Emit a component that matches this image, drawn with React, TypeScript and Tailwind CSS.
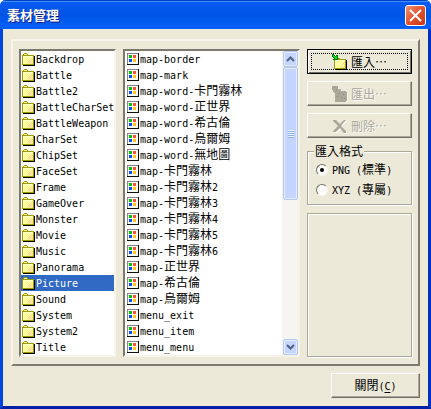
import { ReactNode, useState } from 'react'
import clsx from 'clsx'

const FOLDERS = [
  'Backdrop', 'Battle', 'Battle2', 'BattleCharSet', 'BattleWeapon', 'CharSet', 'ChipSet',
  'FaceSet', 'Frame', 'GameOver', 'Monster', 'Movie', 'Music', 'Panorama', 'Picture',
  'Sound', 'System', 'System2', 'Title',
]

const FILES = [
  'map-border', 'map-mark', 'map-word-卡門霧林', 'map-word-正世界', 'map-word-希古倫',
  'map-word-烏爾姆', 'map-word-無地圖', 'map-卡門霧林', 'map-卡門霧林2', 'map-卡門霧林3',
  'map-卡門霧林4', 'map-卡門霧林5', 'map-卡門霧林6', 'map-正世界', 'map-希古倫',
  'map-烏爾姆', 'menu_exit', 'menu_item', 'menu_menu',
]

const FORMATS = [
  { value: 'png', label: 'PNG (標準)' },
  { value: 'xyz', label: 'XYZ (專屬)' },
]

// Latin cells are half the width of a CJK cell: 10px mono next to 12px CJK
function Mixed({ text }: { text: string }) {
  const runs = text.match(/[\x20-\x7e]+|[^\x20-\x7e]+/g) ?? []
  return (
    <span className="whitespace-pre">
      {runs.map((run, i) => (
        <span
          key={i}
          className={
            /^[\x20-\x7e]/.test(run)
              ? "font-['DejaVu_Sans_Mono',monospace] text-[10px]"
              : "font-['Noto_Sans_CJK_TC',sans-serif] text-[12px]"
          }
        >
          {run}
        </span>
      ))}
    </span>
  )
}

function FolderIcon() {
  return (
    <svg width="13" height="13" viewBox="0 0 13 13" shapeRendering="crispEdges" aria-hidden="true">
      <path d="M2 0h3v1h1v1h6v10H0V2h1V1h1z" fill="#9c9c00" />
      <path d="M12 3h1v10H1v-1h11z" fill="#000" />
      <path d="M2 1h3v1H2zM1 3h10v8H1z" fill="#ffff9c" />
      <path d="M1 3h10v1H2v7H1z" fill="#ffffd8" />
      <path d="M9 5h1v1H9zM7 7h1v1H7zM9 7h1v1H9zM10 6h1v1h-1zM8 6h1v1H8zM5 9h1v1H5zM7 9h1v1H7zM9 9h1v1H9zM6 8h1v1H6zM8 8h1v1H8zM10 8h1v1h-1zM6 10h1v1H6zM8 10h1v1H8zM10 10h1v1h-1z" fill="#ffce9c" />
    </svg>
  )
}

function ImageIcon() {
  return (
    <svg width="12" height="12" viewBox="0 0 12 12" shapeRendering="crispEdges" aria-hidden="true">
      <path d="M0 0h12v12H0z" fill="#101010" />
      <path d="M0 0h11v11H0z" fill="#848484" />
      <path d="M1 1h10v10H1z" fill="#fff" />
      <path d="M2 2h3v3H2z" fill="#00c800" />
      <path d="M6 2h3v3H6z" fill="#ff5030" />
      <path d="M2 6h3v3H2z" fill="#0050ff" />
      <path d="M6 6h3v3H6z" fill="#ffc800" />
    </svg>
  )
}

function ImportIcon() {
  return (
    <svg width="16" height="16" viewBox="0 0 16 16" shapeRendering="crispEdges" aria-hidden="true">
      <path d="M2 4h6v1h6v10H2z" fill="#9c9c00" />
      <path d="M14 6h1v10H3v-1h11z" fill="#000" />
      <path d="M3 6h10v8H3z" fill="#ffff9c" />
      <path d="M3 6h10v1H4v7H3z" fill="#ffffd8" />
      <path d="M12 8h1v1h-1zM10 10h1v1h-1zM12 10h1v1h-1zM11 9h1v1h-1zM8 12h1v1H8zM10 12h1v1h-1zM12 12h1v1h-1zM9 13h1v1H9zM11 13h1v1h-1z" fill="#ffce9c" />
      <path d="M0 0h2v1h1v1h1V1h2v5H1V5h1V4H1V3H0z" fill="#007800" />
      <path d="M1 1h1v1h1v1h1V2h1v3H3V4H2V3H1z" fill="#00e020" />
    </svg>
  )
}

function ExportIcon() {
  const shape = 'M0 0h6v3h3v2h5v1h1v9h-1v1H3v-9H2V6H1V4H0z'
  return (
    <svg width="16" height="16" viewBox="0 0 16 16" shapeRendering="crispEdges" aria-hidden="true">
      <path d={shape} fill="#fff" transform="translate(1 1)" />
      <path d={shape} fill="#aca899" />
      <path d="M2 1h1v1H2zM4 3h1v1H4zM7 7h1v1H7zM11 8h1v1h-1zM5 10h1v1H5zM9 11h1v1H9zM12 12h1v1h-1z" fill="#8f8c7c" />
    </svg>
  )
}

function DeleteIcon() {
  const cross = 'M1 2h3l4 4 4-4h2L9 8l5 5v2h-2L8 10l-4 4H1v-1l5-5-5-5z'
  return (
    <svg width="16" height="16" viewBox="0 0 16 16" aria-hidden="true">
      <path d={cross} fill="#fff" transform="translate(1 1)" />
      <path d={cross} fill="#aca899" />
    </svg>
  )
}

type ListProps = {
  label: string
  items: string[]
  icon: ReactNode
  selected: string | null
  onSelect: (item: string) => void
}

function ItemList({ label, items, icon, selected, onSelect }: ListProps) {
  return (
    <ul aria-label={label} className="min-w-0 flex-1 overflow-hidden bg-white">
      {items.map((item) => (
        <li key={item}>
          <button
            type="button"
            onClick={() => onSelect(item)}
            className={clsx(
              'flex h-4 w-full items-center text-left leading-4',
              selected === item ? 'bg-[#316ac5] text-white' : 'text-black'
            )}
          >
            <span className="flex w-[15px] shrink-0 justify-center">{icon}</span>
            <Mixed text={item} />
          </button>
        </li>
      ))}
    </ul>
  )
}

function ScrollArrow({ label, path }: { label: string; path: string }) {
  return (
    <button
      type="button"
      aria-label={label}
      className="flex h-4 w-full items-center justify-center rounded-xs border border-[#b4c8f6] bg-[#c6d5fd] shadow-[inset_0_0_0_1px_#e4ecff]"
    >
      <svg width="9" height="6" viewBox="0 0 9 6" aria-hidden="true">
        <path d={path} fill="none" stroke="#4d6185" strokeWidth="2" />
      </svg>
    </button>
  )
}

function ScrollBar() {
  return (
    <div className="flex w-4 shrink-0 flex-col bg-[#f6f5f1] pl-px">
      <ScrollArrow label="Scroll up" path="M1 5l3.5-3.5L8 5" />
      <div className="flex-1">
        <div className="flex h-[133px] flex-col items-center justify-center gap-px rounded-xs border border-[#b4c8f6] bg-[#c6d5fd] shadow-[inset_0_0_0_1px_#e4ecff]">
          {[0, 1, 2, 3].map((n) => (
            <span key={n} className="h-px w-1.5 bg-[#eef4fe] shadow-[0_1px_0_#8cb0f8]" />
          ))}
        </div>
      </div>
      <ScrollArrow label="Scroll down" path="M1 1l3.5 3.5L8 1" />
    </div>
  )
}

const RAISED = 'border border-t-white border-l-white border-r-[#716f64] border-b-[#716f64] shadow-[inset_-1px_-1px_0_#aca899]'
const SUNKEN = 'flex border-2 border-t-[#7b786c] border-l-[#7b786c] border-r-[#f6f4ea] border-b-[#f6f4ea]'
const ETCHED = 'border border-[#aca899] shadow-[inset_1px_1px_0_#fff,1px_1px_0_#fff]'

export default function App() {
  const [folder, setFolder] = useState('Picture')
  const [file, setFile] = useState<string | null>(null)
  const [format, setFormat] = useState('png')

  return (
    <div className="flex flex-col overflow-hidden rounded-t-md bg-[#0046e0] font-['Noto_Sans_CJK_TC',sans-serif] text-[12px] leading-4 text-black">
      {/* Title bar */}
      <header className="flex h-[29px] items-center justify-between bg-linear-to-b from-[#0a5cf0] via-[#0054e6] to-[#0060fa] pr-[5px] pl-[7px] shadow-[inset_0_1px_0_#0040c8,inset_0_2px_0_#3c90ff]">
        <h1 className="text-[13px] font-bold text-white [text-shadow:1px_1px_0_#0a1883]">素材管理</h1>
        <button
          type="button"
          aria-label="Close window"
          className="mt-0.5 flex size-[21px] items-center justify-center rounded-[3px] border border-white bg-linear-to-br from-[#f09070] via-[#e2512c] to-[#c8381a]"
        >
          <svg width="13" height="13" viewBox="0 0 13 13" aria-hidden="true">
            <path d="M1 1l11 11M12 1L1 12" stroke="#fff" strokeWidth="2" />
          </svg>
        </button>
      </header>

      <main className="border-x-3 border-b-3 border-[#0046e0] border-r-[#0030c0] border-b-[#0020a8] bg-[#ece9d8] px-2 pt-2.5 pb-2">
        <div className="flex gap-[7px] border-2 border-t-[#f6f4ea] border-r-[#807d70] border-b-[#807d70] border-l-[#f6f4ea] px-1.5 pt-2 pb-[7px]">
          <div className={clsx(SUNKEN, 'w-[97px] shrink-0')}>
            <ItemList label="Folders" items={FOLDERS} icon={<FolderIcon />} selected={folder} onSelect={setFolder} />
          </div>

          <div className={clsx(SUNKEN, 'min-w-0 flex-1')}>
            <ItemList label="Files" items={FILES} icon={<ImageIcon />} selected={file} onSelect={setFile} />
            <ScrollBar />
          </div>

          {/* Actions */}
          <div className="flex w-[105px] shrink-0 flex-col">
            <div className="flex flex-col gap-[7px]">
              <button
                type="button"
                className="flex h-[25px] border border-black bg-[#ece9d8] p-[3px] shadow-[inset_1px_1px_0_#fff,inset_-1px_-1px_0_#716f64]"
              >
                <span className="flex h-full w-full items-center justify-center gap-[3px] border border-dotted border-black">
                  <ImportIcon />
                  <Mixed text="匯入…" />
                </span>
              </button>
              <button type="button" disabled className={clsx(RAISED, 'flex h-[25px] items-center justify-center gap-[3px] text-[#aca899] [text-shadow:1px_1px_0_#fff]')}>
                <ExportIcon />
                <Mixed text="匯出…" />
              </button>
              <button type="button" disabled className={clsx(RAISED, 'flex h-[25px] items-center justify-center gap-[3px] text-[#aca899] [text-shadow:1px_1px_0_#fff]')}>
                <DeleteIcon />
                <Mixed text="刪除…" />
              </button>
            </div>

            <fieldset className={clsx(ETCHED, 'mt-1.5 min-w-0 px-1.5 pb-1.5')}>
              <legend className="h-3.5 bg-[#ece9d8] px-px leading-3.5">匯入格式</legend>
              <div className="flex flex-col gap-1 pt-1">
                {FORMATS.map(({ value, label }) => (
                  <label key={value} className="flex h-4 items-center gap-1 pl-0.5">
                    <input
                      type="radio"
                      name="format"
                      value={value}
                      checked={format === value}
                      onChange={() => setFormat(value)}
                      className="grid size-3 appearance-none place-items-center rounded-full border border-t-[#716f64] border-r-[#f6f4ea] border-b-[#f6f4ea] border-l-[#716f64] bg-white before:size-1 before:rounded-full checked:before:bg-black"
                    />
                    <Mixed text={label} />
                  </label>
                ))}
              </div>
            </fieldset>

            <div className={clsx(ETCHED, 'mt-2 flex-1')} />
          </div>
        </div>

        <div className="mt-[7px] flex justify-end">
          <button type="button" className={clsx(RAISED, 'flex h-[25px] w-[89px] items-center justify-center')}>
            <span>
              關閉
              <span className="font-['DejaVu_Sans_Mono',monospace] text-[10px]">
                (<u className="underline-offset-2">C</u>)
              </span>
            </span>
          </button>
        </div>
      </main>
    </div>
  )
}
